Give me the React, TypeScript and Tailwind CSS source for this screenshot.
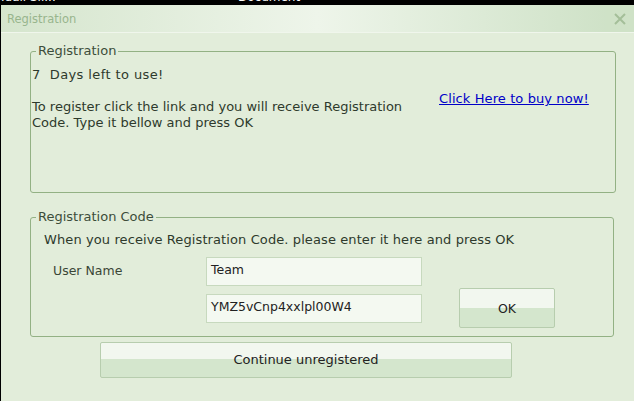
import React from "react"

const font = { fontFamily: '"DejaVu Sans", Verdana, sans-serif' }

function Group({ title, className, children }: { title: string; className: string; children: React.ReactNode }) {
  return (
    <fieldset className={`border border-[#93b184] rounded-[3px] ${className}`}>
      <legend className="ml-[5px] px-[2px] text-[13px] leading-[14px] text-[#3d4d3a]">{title}</legend>
      {children}
    </fieldset>
  )
}

function Input({ value }: { value: string }) {
  return (
    <div className="w-[216px] h-[29px] border border-[#c7d9be] bg-[#f4f9f1] px-[4px] pt-[3px] text-[12.5px] text-[#222]">
      {value}
    </div>
  )
}

export default function App() {
  return (
    <div className="w-[634px] h-[401px] bg-black flex flex-col overflow-hidden" style={font}>
      <div className="h-[5px] overflow-hidden relative shrink-0">
        <div className="absolute left-[1px] top-[-9px] text-[12px] text-white leading-[12px]">Idali Sil...</div>
        <div className="absolute left-[238px] top-[-9px] text-[12px] text-white leading-[12px]">Document</div>
      </div>
      <div className="ml-[1px] flex-1 flex flex-col bg-[#e2edda]">
        <div className="h-[27px] flex items-center justify-between bg-gradient-to-r from-[#d5e5cd] via-[#eef5ea] to-[#cce0c4]">
          <span className="ml-[6px] pt-[3px] text-[11.5px] text-[#98b58d]">Registration</span>
          <span className="w-[28px] h-[27px] flex items-center justify-center bg-[#cfe2c7]">
            <svg width="12" height="12" viewBox="0 0 12 12">
              <path d="M1 1 L11 11 M11 1 L1 11" stroke="#a4bf99" strokeWidth="2" />
            </svg>
          </span>
        </div>
        <div className="h-[1px] bg-[#f0f6ec]" />

        <Group title="Registration" className="ml-[29px] mt-[11px] w-[586px] h-[149px]">
          <div className="flex">
            <div className="pl-[1px] text-[13px] leading-[16px] text-[#2e3a2c]">
              <div className="mt-[9px] tracking-[0.4px]">7&nbsp; Days left to use!</div>
              <div className="mt-[16px] w-[400px]">
                To register click the link and you will receive Registration Code. Type it bellow and press OK
              </div>
            </div>
            <a className="ml-[7px] mt-[33px] text-[13px] tracking-[0.1px] leading-[16px] text-[#0000c8] underline">Click Here to buy now!</a>
          </div>
        </Group>

        <Group title="Registration Code" className="ml-[29px] mt-[17px] w-[584px] h-[127px]">
          <div className="pl-[13px] pt-[8px] text-[13px] tracking-[0.1px] leading-[16px] text-[#2e3a2c]">
            When you receive Registration Code. please enter it here and press OK
          </div>
          <div className="flex mt-[1px]">
            <div className="pl-[22px] pt-[13px] w-[175px] text-[12.5px] text-[#3a4636]">User Name</div>
            <div className="flex flex-col gap-[8px] pt-[8px]">
              <Input value="Team" />
              <Input value="YMZ5vCnp4xxlpl00W4" />
            </div>
            <button className="ml-[37px] mt-[39px] w-[96px] h-[40px] border border-[#b7cdae] rounded-[2px] bg-[linear-gradient(#f2f7ef_0%,#f2f7ef_50%,#d4e6cd_50%,#d4e6cd_100%)] text-[12.5px] text-[#222] pt-[2px]">
              OK
            </button>
          </div>
        </Group>

        <button className="ml-[99px] mt-[5px] w-[412px] h-[36px] border border-[#b7cdae] rounded-[2px] bg-[linear-gradient(#f2f7ef_0%,#f2f7ef_48%,#d4e6cd_48%,#d4e6cd_100%)] text-[13px] text-[#222]">
          Continue unregistered
        </button>
      </div>
    </div>
  )
}
